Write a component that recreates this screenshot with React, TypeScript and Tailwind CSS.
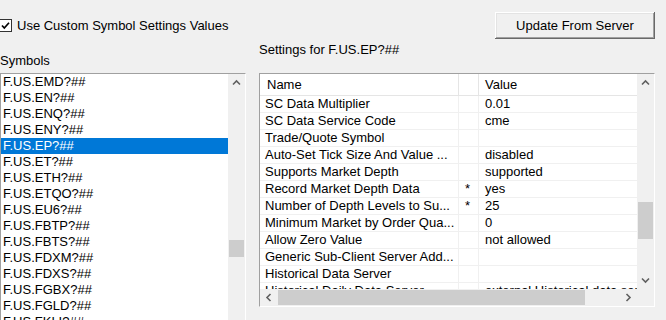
import React from 'react'

const symbols = [
  'F.US.EMD?##',
  'F.US.EN?##',
  'F.US.ENQ?##',
  'F.US.ENY?##',
  'F.US.EP?##',
  'F.US.ET?##',
  'F.US.ETH?##',
  'F.US.ETQO?##',
  'F.US.EU6?##',
  'F.US.FBTP?##',
  'F.US.FBTS?##',
  'F.US.FDXM?##',
  'F.US.FDXS?##',
  'F.US.FGBX?##',
  'F.US.FGLD?##',
  'F.US.FKLI?##',
]

const settings: { name: string; flag?: string; value: string }[] = [
  { name: 'SC Data Multiplier', value: '0.01' },
  { name: 'SC Data Service Code', value: 'cme' },
  { name: 'Trade/Quote Symbol', value: '' },
  { name: 'Auto-Set Tick Size And Value ...', value: 'disabled' },
  { name: 'Supports Market Depth', value: 'supported' },
  { name: 'Record Market Depth Data', flag: '*', value: 'yes' },
  { name: 'Number of Depth Levels to Su...', flag: '*', value: '25' },
  { name: 'Minimum Market by Order Qua...', value: '0' },
  { name: 'Allow Zero Value', value: 'not allowed' },
  { name: 'Generic Sub-Client Server Add...', value: '' },
  { name: 'Historical Data Server', value: '' },
  { name: 'Historical Daily Data Server', value: 'external Historical data server' },
]

function Chevron({ dir }: { dir: 'up' | 'down' | 'left' | 'right' }) {
  const rot = { up: 0, right: 90, down: 180, left: 270 }[dir]
  return (
    <svg width="9" height="9" viewBox="0 0 9 9" style={{ transform: `rotate(${rot}deg)` }}>
      <polyline points="1,6.5 4.5,3 8,6.5" fill="none" stroke="#606060" strokeWidth="1.6" />
    </svg>
  )
}

export default function App() {
  return (
    <div className="w-[666px] h-[320px] overflow-hidden bg-[#f0f0f0] font-['Liberation_Sans',Arial,sans-serif] text-[13px] text-black">
      <div className="grid grid-cols-[246px_396px] gap-x-[13px]">
        {/* left column */}
        <div className="flex flex-col pt-[18px]">
          <div className="flex h-[15px] items-center">
            <div className="-ml-px flex h-[13px] w-[13px] items-center justify-center border border-[#333333] bg-white">
              <svg width="11" height="11" viewBox="0 0 11 11">
                <polyline points="2,5.5 4.3,8 9,2.8" fill="none" stroke="#000" strokeWidth="1.7" />
              </svg>
            </div>
            <span className="ml-[5px] leading-[15px] whitespace-nowrap">Use Custom Symbol Settings Values</span>
          </div>
          <div className="mt-[20px] leading-[15px]">Symbols</div>
          <div className="mt-[5px] flex h-[260px] border border-t-[#a0a0a0] border-l-[#a0a0a0] border-r-white border-b-white">
            <div className="w-[227px] bg-white overflow-hidden">
              {symbols.map((s) => (
                <div
                  key={s}
                  className={
                    s === 'F.US.EP?##'
                      ? 'h-[16px] pl-[2px] leading-[16px] whitespace-nowrap bg-[#0078d7] text-white'
                      : 'h-[16px] pl-[2px] leading-[16px] whitespace-nowrap'
                  }
                >
                  {s}
                </div>
              ))}
            </div>
            <div className="flex w-[17px] flex-col bg-[#f0f0f0]">
              <div className="flex h-[17px] items-center justify-center">
                <Chevron dir="up" />
              </div>
              <div className="ml-px mt-[149px] h-[17px] w-[15px] bg-[#cdcdcd]" />
            </div>
          </div>
        </div>

        {/* right column */}
        <div className="flex flex-col">
          <button className="mt-[12px] h-[27px] w-[160px] self-end bg-[#f0f0f0] leading-[15px] shadow-[inset_-1px_-1px_0_#696969,inset_1px_1px_0_#ffffff,inset_-2px_-2px_0_#a0a0a0,inset_2px_2px_0_#e3e3e3]">
            Update From Server
          </button>
          <div className="mt-[3px] leading-[15px]">Settings for F.US.EP?##</div>
          <div className="mt-[16px] flex h-[234px] w-[396px] flex-col border border-t-[#a0a0a0] border-l-[#a0a0a0] border-r-white border-b-white">
            <div className="flex h-[215px]">
              <div className="w-[377px] overflow-hidden bg-white">
                <div className="flex h-[22px] border-b border-[#e5e5e5] leading-[21px]">
                  <div className="w-[199px] border-r border-[#e5e5e5] pl-[7px]">Name</div>
                  <div className="w-[20px] border-r border-[#e5e5e5]" />
                  <div className="flex-1 pl-[6px]">Value</div>
                </div>
                {settings.map((r) => (
                  <div key={r.name} className="flex h-[17px] border-b border-[#f0f0f0] leading-[16px] whitespace-nowrap">
                    <div className="w-[199px] overflow-hidden border-r border-[#f0f0f0] pl-[5px]">{r.name}</div>
                    <div className="w-[20px] border-r border-[#f0f0f0] pl-[6px]">{r.flag}</div>
                    <div className="flex-1 overflow-hidden pl-[6px]">{r.value}</div>
                  </div>
                ))}
              </div>
              <div className="flex w-[17px] flex-col bg-[#f0f0f0]">
                <div className="flex h-[17px] items-center justify-center">
                  <Chevron dir="up" />
                </div>
                <div className="ml-px mt-[111px] h-[37px] w-[15px] bg-[#cdcdcd]" />
                <div className="mt-auto flex h-[17px] items-center justify-center">
                  <Chevron dir="down" />
                </div>
              </div>
            </div>
            <div className="flex h-[17px] bg-[#f0f0f0]">
              <div className="flex w-[377px]">
                <div className="flex w-[17px] items-center justify-center">
                  <Chevron dir="left" />
                </div>
                <div className="ml-px mt-px h-[15px] w-[307px] bg-[#cdcdcd]" />
                <div className="ml-auto flex w-[17px] items-center justify-center">
                  <Chevron dir="right" />
                </div>
              </div>
              <div className="w-[17px]" />
            </div>
          </div>
        </div>
      </div>
    </div>
  )
}
